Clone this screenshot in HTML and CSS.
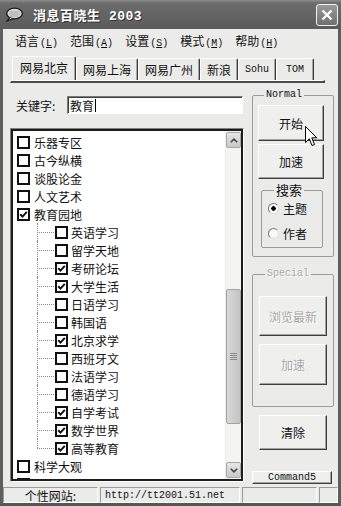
FILE: index.html
```html
<!DOCTYPE html>
<html lang="zh">
<head>
  <meta charset="UTF-8">
  <title>消息百晓生 2003</title>
  <link rel="stylesheet" href="styles.css">
</head>
<body>
  <div class="window">
    <!-- Title bar -->
    <div class="titlebar">
      <svg class="app-icon" width="18" height="15" viewBox="0 0 18 15">
        <ellipse cx="9.5" cy="6.5" rx="7.8" ry="5.3" fill="#d8d8d8" stroke="#1a1a1a" stroke-width="1.3"/>
        <path d="M4.5 10.8 L2 14 L8 11.6" fill="#d8d8d8" stroke="#1a1a1a" stroke-width="1.2"/>
        <path d="M5 5 h9 M4 7 h11 M5 9 h8" stroke="#9a9a9a" stroke-width="0.8"/>
      </svg>
      <div class="title">消息百晓生 <span class="ver">2003</span></div>
      <div class="close">
        <svg width="12" height="12" viewBox="0 0 12 12"><path d="M1.5 1.5 L10.5 10.5 M10.5 1.5 L1.5 10.5" stroke="#fff" stroke-width="2.4"/></svg>
      </div>
    </div>

    <div class="client">
      <!-- Menu -->
      <div class="menubar">
        <span class="menu-item">语言<span class="acc">(<u>L</u>)</span></span>
        <span class="menu-item">范围<span class="acc">(<u>A</u>)</span></span>
        <span class="menu-item">设置<span class="acc">(<u>S</u>)</span></span>
        <span class="menu-item">模式<span class="acc">(<u>M</u>)</span></span>
        <span class="menu-item">帮助<span class="acc">(<u>H</u>)</span></span>
      </div>

      <!-- Tabs -->
      <div class="tabs">
        <div class="tab-row">
          <div class="tab active">网易北京</div>
          <div class="tab">网易上海</div>
          <div class="tab">网易广州</div>
          <div class="tab">新浪</div>
          <div class="tab mono">Sohu</div>
          <div class="tab mono">TOM</div>
        </div>
        <div class="tab-panel"></div>
      </div>

      <div class="main">
        <!-- Left side: keyword + tree -->
        <div class="left">
          <div class="keyword">
            <span class="keyword-label">关键字:</span>
            <div class="keyword-input">教育<span class="caret"></span></div>
          </div>

          <div class="list">
            <div class="list-body">
              <div class="tree">
                <div class="node"><span class="check"></span>乐器专区</div>
                <div class="node"><span class="check"></span>古今纵横</div>
                <div class="node"><span class="check"></span>谈股论金</div>
                <div class="node"><span class="check"></span>人文艺术</div>
                <div class="node"><span class="check on"><svg width="9" height="9" viewBox="0 0 9 9"><path d="M1.2 4.2 L3.5 6.6 L7.8 1.8" fill="none" stroke="#111" stroke-width="2"/></svg></span>教育园地</div>
                <div class="node child"><span class="check"></span>英语学习</div>
                <div class="node child"><span class="check"></span>留学天地</div>
                <div class="node child"><span class="check on"><svg width="9" height="9" viewBox="0 0 9 9"><path d="M1.2 4.2 L3.5 6.6 L7.8 1.8" fill="none" stroke="#111" stroke-width="2"/></svg></span>考研论坛</div>
                <div class="node child"><span class="check on"><svg width="9" height="9" viewBox="0 0 9 9"><path d="M1.2 4.2 L3.5 6.6 L7.8 1.8" fill="none" stroke="#111" stroke-width="2"/></svg></span>大学生活</div>
                <div class="node child"><span class="check"></span>日语学习</div>
                <div class="node child"><span class="check"></span>韩国语</div>
                <div class="node child"><span class="check on"><svg width="9" height="9" viewBox="0 0 9 9"><path d="M1.2 4.2 L3.5 6.6 L7.8 1.8" fill="none" stroke="#111" stroke-width="2"/></svg></span>北京求学</div>
                <div class="node child"><span class="check"></span>西班牙文</div>
                <div class="node child"><span class="check"></span>法语学习</div>
                <div class="node child"><span class="check"></span>德语学习</div>
                <div class="node child"><span class="check on"><svg width="9" height="9" viewBox="0 0 9 9"><path d="M1.2 4.2 L3.5 6.6 L7.8 1.8" fill="none" stroke="#111" stroke-width="2"/></svg></span>自学考试</div>
                <div class="node child"><span class="check on"><svg width="9" height="9" viewBox="0 0 9 9"><path d="M1.2 4.2 L3.5 6.6 L7.8 1.8" fill="none" stroke="#111" stroke-width="2"/></svg></span>数学世界</div>
                <div class="node child last"><span class="check on"><svg width="9" height="9" viewBox="0 0 9 9"><path d="M1.2 4.2 L3.5 6.6 L7.8 1.8" fill="none" stroke="#111" stroke-width="2"/></svg></span>高等教育</div>
                <div class="node"><span class="check"></span>科学大观</div>
                <div class="node"><span class="check"></span></div>
              </div>

              <div class="scrollbar">
                <div class="sb-btn">
                  <svg width="8" height="5" viewBox="0 0 8 5"><path d="M0.8 4.3 L4 1.2 L7.2 4.3" fill="none" stroke="#444" stroke-width="1.6"/></svg>
                </div>
                <div class="sb-track">
                  <div class="sb-thumb">
                    <svg width="7" height="7" viewBox="0 0 7 7"><path d="M0 0.5 h7 M0 2.5 h7 M0 4.5 h7 M0 6.5 h7" stroke="#8c8c8c" stroke-width="1"/></svg>
                  </div>
                </div>
                <div class="sb-btn">
                  <svg width="8" height="5" viewBox="0 0 8 5"><path d="M0.8 0.7 L4 3.8 L7.2 0.7" fill="none" stroke="#444" stroke-width="1.6"/></svg>
                </div>
              </div>
            </div>
          </div>
        </div>

        <!-- Right side: buttons -->
        <div class="right">
          <fieldset class="group normal">
            <legend class="mono">Normal</legend>
            <button class="btn btn-start">开始</button>
            <button class="btn btn-speed">加速</button>
            <fieldset class="group search">
              <legend>搜索</legend>
              <div class="radio-row"><span class="radio on"></span>主题</div>
              <div class="radio-row"><span class="radio"></span>作者</div>
            </fieldset>
          </fieldset>

          <fieldset class="group special">
            <legend class="mono">Special</legend>
            <button class="btn btn-browse" disabled>浏览最新</button>
            <button class="btn btn-speed2" disabled>加速</button>
          </fieldset>

          <button class="btn btn-clear">清除</button>
          <button class="btn btn-cmd mono">Command5</button>

          <svg class="cursor" width="13" height="21" viewBox="0 0 13 21">
            <path d="M0.5 0.5 L0.5 16.5 L4.3 12.8 L7 19.5 L9.5 18.5 L6.8 11.8 L11.8 11.8 Z" fill="#fff" stroke="#000" stroke-width="1"/>
          </svg>
        </div>
      </div>

      <!-- Status bar -->
      <div class="statusbar">
        <div class="panel p-label">个性网站:</div>
        <div class="panel p-url mono">http://tt2001.51.net</div>
        <div class="panel p-3"></div>
        <div class="panel p-4"></div>
      </div>
    </div>
  </div>
</body>
</html>
```

FILE: styles.css
```css
/* General */
* {
  box-sizing: border-box;
}

body {
  margin: 0;
  background: #fff;
  font-family: "Noto Sans CJK SC", "Noto Sans", sans-serif;
  font-size: 12px;
  color: #111;
}

.mono {
  font-family: "Liberation Mono", "DejaVu Sans Mono", monospace;
  font-size: 10px;
}

.window {
  width: 341px;
  height: 506px;
  display: flex;
  flex-direction: column;
  background: #ebebea;
}

/* Title bar */
.titlebar {
  height: 29px;
  flex: none;
  display: flex;
  align-items: center;
  padding: 0 3px 0 5px;
  background: linear-gradient(#8e8e8e 0, #6c6c6c 3px, #646464 50%, #5b5b5b 100%);
}

.app-icon {
  margin-right: 10px;
  flex: none;
}

.title {
  flex: 1;
  color: #fff;
  font-size: 13px;
  font-weight: 700;
  letter-spacing: 0.5px;
  text-shadow: 1px 1px 0 #333;
}

.title .ver {
  font-family: "Liberation Mono", monospace;
  font-size: 13px;
  margin-left: 5px;
}

.close {
  width: 22px;
  height: 22px;
  border: 1px solid #f2f2f2;
  border-radius: 3px;
  background: linear-gradient(#999, #6e6e6e);
  display: flex;
  align-items: center;
  justify-content: center;
}

/* Client area */
.client {
  flex: 1;
  display: flex;
  flex-direction: column;
  border-left: 3px solid #5e5e5e;
  border-right: 3px solid #5e5e5e;
  border-bottom: 3px solid #565656;
}

.menubar {
  height: 22px;
  flex: none;
  display: flex;
  align-items: center;
  gap: 12px;
  padding-left: 12px;
}

.menu-item .acc {
  font-family: "Liberation Mono", monospace;
  font-size: 10px;
  margin-left: 1px;
}

/* Tabs */
.tabs {
  margin: 5px 13px 0 7px;
  flex: none;
}

.tab-row {
  height: 24px;
  display: flex;
  align-items: flex-end;
  padding-left: 2px;
}

.tab {
  height: 22px;
  min-width: 38px;
  padding: 0 6px 1px;
  display: flex;
  align-items: center;
  justify-content: center;
  border-top: 1px solid #fff;
  border-left: 1px solid #fff;
  border-right: 1px solid #3c3c3c;
  border-radius: 2px 2px 0 0;
  box-shadow: inset -1px 0 0 #a6a6a6;
}

.tab.active {
  height: 24px;
  padding: 0 7px 2px;
}

.tab-panel {
  height: 3px;
  border-top: 1px solid #fff;
  border-left: 1px solid #fff;
  border-right: 2px solid #444;
  border-bottom: 2px solid #4c4c4c;
}

/* Main area */
.main {
  flex: 1;
  display: flex;
  gap: 8px;
  padding-left: 7px;
}

.left {
  width: 234px;
  padding-top: 13px;
  display: flex;
  flex-direction: column;
}

.keyword {
  height: 18px;
  display: flex;
  align-items: center;
  padding-left: 6px;
  margin-bottom: 14px;
}

.keyword-label {
  width: 51px;
}

.keyword-input {
  width: 176px;
  height: 18px;
  display: flex;
  align-items: center;
  padding-left: 2px;
  background: #fff;
  border: 1px solid;
  border-color: #7a7a7a #fff #fff #7a7a7a;
  box-shadow: inset 1px 1px 0 #404040;
}

.caret {
  display: inline-block;
  width: 1px;
  height: 13px;
  margin-left: 1px;
  background: #000;
}

/* Tree list */
.list {
  height: 354px;
  display: flex;
  border: 1px solid;
  border-color: #808080 #fff #fff #808080;
}

.list-body {
  flex: 1;
  display: flex;
  border: 2px solid #1c1c1c;
  background: #fff;
  overflow: hidden;
}

.tree {
  flex: 1;
  padding-top: 2px;
  overflow: hidden;
}

.node {
  height: 18px;
  display: flex;
  align-items: center;
  gap: 4px;
  padding-left: 4px;
  white-space: nowrap;
  position: relative;
}

.node.child {
  padding-left: 42px;
  gap: 3px;
}

.node.child::before {
  content: "";
  position: absolute;
  left: 24px;
  top: 9px;
  width: 17px;
  border-top: 1px dotted #8a8a8a;
}

.node.child::after {
  content: "";
  position: absolute;
  left: 24px;
  top: 0;
  height: 18px;
  border-left: 1px dotted #8a8a8a;
}

.node.child.last::after {
  height: 9px;
}

.check {
  width: 13px;
  height: 13px;
  flex: none;
  border: 2px solid #111;
  background: #fff;
  display: flex;
  align-items: center;
  justify-content: center;
}

/* Scrollbar */
.scrollbar {
  width: 16px;
  flex: none;
  display: flex;
  flex-direction: column;
  padding: 1px 0;
  background: #f4f4f2;
  border-left: 1px solid #ececea;
}

.sb-btn {
  height: 16px;
  flex: none;
  display: flex;
  align-items: center;
  justify-content: center;
  border: 1px solid #a8a8a8;
  border-radius: 2px;
  background: linear-gradient(#e6e6e6, #c8c8c8);
}

.sb-track {
  flex: 1;
}

.sb-thumb {
  margin-top: 141px;
  height: 135px;
  display: flex;
  align-items: center;
  justify-content: center;
  border: 1px solid #a4a4a4;
  border-radius: 2px;
  background: linear-gradient(90deg, #d8d8d8, #c4c4c4);
}

/* Right column */
.right {
  width: 82px;
  padding-top: 6px;
  display: flex;
  flex-direction: column;
  align-items: flex-start;
  position: relative;
}

.group {
  margin: 0;
  min-width: 0;
  border: 1px solid #9c9c9c;
  border-radius: 2px;
}

.group legend {
  padding: 0 2px;
  margin-left: 6px;
  line-height: 12px;
}

.group.normal {
  width: 82px;
  padding: 4px 5px 8px 5px;
}

.group.search {
  width: 62px;
  margin: 5px 0 0 3px;
  padding: 2px 4px 4px 6px;
  display: flex;
  flex-direction: column;
  gap: 5px;
}

.group.search legend {
  font-size: 13px;
  margin-left: 6px;
}

.group.special {
  width: 82px;
  margin-top: 11px;
  padding: 16px 5px 21px 6px;
}

.group.special legend {
  color: #a8a8a8;
  text-shadow: 1px 1px 0 #fff;
}

.radio-row {
  height: 20px;
  display: flex;
  align-items: center;
  gap: 4px;
  font-size: 12px;
}

.radio {
  width: 11px;
  height: 11px;
  border-radius: 50%;
  border: 1px solid;
  border-color: #777 #ddd #ddd #777;
  background: #fafafa;
}

.radio.on {
  background: radial-gradient(circle, #000 0 2px, #fff 2.5px);
}

/* Buttons */
.btn {
  font-family: inherit;
  font-size: 12px;
  color: #111;
  padding: 0;
  display: flex;
  align-items: center;
  justify-content: center;
  border: 1px solid;
  border-color: #fff #3e3e3e #3e3e3e #fff;
  box-shadow: inset -1px -1px 0 #a2a2a2;
  background: #efefee;
}

.btn:disabled {
  color: #a6a6a6;
  text-shadow: 1px 1px 0 #fff;
}

.btn.mono {
  font-family: "Liberation Mono", monospace;
  font-size: 10px;
}

.btn-start {
  width: 66px;
  height: 36px;
}

.btn-speed {
  width: 66px;
  height: 35px;
  margin-top: 3px;
}

.btn-browse {
  width: 68px;
  height: 40px;
}

.btn-speed2 {
  width: 68px;
  height: 41px;
  margin-top: 8px;
}

.btn-clear {
  width: 68px;
  height: 35px;
  margin: 8px 0 0 7px;
}

.btn-cmd {
  width: 80px;
  height: 13px;
  margin-top: 21px;
}

.cursor {
  position: absolute;
  left: 53px;
  top: 43px;
}

/* Status bar */
.statusbar {
  height: 16px;
  flex: none;
  display: flex;
  gap: 2px;
}

.panel {
  height: 16px;
  display: flex;
  align-items: center;
  border: 1px solid;
  border-color: #9a9a9a #fff #fff #9a9a9a;
}

.p-label {
  width: 95px;
  justify-content: center;
}

.p-url {
  width: 140px;
  padding-left: 4px;
}

.p-3 {
  width: 75px;
}

.p-4 {
  flex: 1;
}
```
